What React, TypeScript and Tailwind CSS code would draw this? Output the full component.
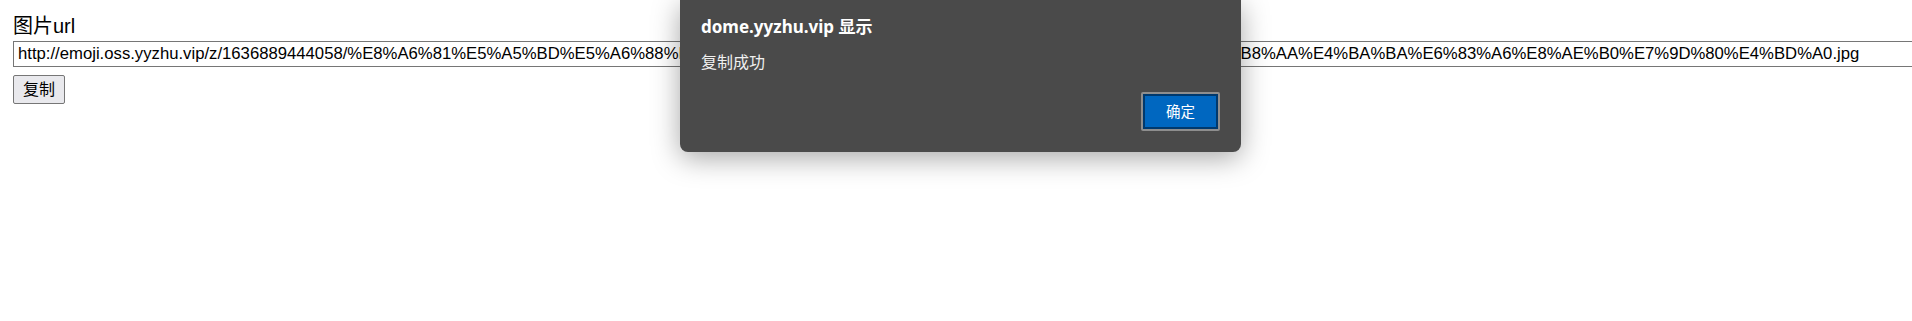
import React from 'react';

// Page: a copy-url form with a browser alert on top of it.

const URL_TEXT =
  'http://emoji.oss.yyzhu.vip/z/1636889444058/%E8%A6%81%E5%A5%BD%E5%A6%88%E5%A6%88%E6%80%BB%E4%BC%9A%E6%9C%89%E4%B8%80%E4%B8%AA%E4%BA%BA%E6%83%A6%E8%AE%B0%E7%9D%80%E4%BD%A0.jpg';

function AlertDialog(): React.JSX.Element {
  return (
    <div className="absolute left-[680px] top-0 w-[561px] h-[152px] bg-[#4a4a4a] rounded-b-[8px] shadow-[0_6px_28px_rgba(0,0,0,0.35)] px-[21px] font-['Noto_Sans','Noto_Sans_CJK_SC',sans-serif] text-white flex flex-col">
      <div className="pt-[16px] text-[17px] leading-[22px] font-bold">dome.yyzhu.vip 显示</div>
      <div className="mt-[14px] text-[16px] leading-[20px] text-[#f0f0f0]">复制成功</div>
      <div className="flex-1" />
      <div className="flex justify-end pb-[21px]">
        <button
          type="button"
          className="w-[79px] h-[39px] rounded-[2px] border-2 border-[#8e8e8e] p-0 flex"
        >
          <span className="flex-1 border-2 border-[#00396d] bg-[#0067c0] flex items-center justify-center text-[14.5px] text-white">
            确定
          </span>
        </button>
      </div>
    </div>
  );
}

export default function App(): React.JSX.Element {
  return (
    <div className="relative w-[1912px] h-[321px] overflow-hidden bg-white text-black font-['Liberation_Sans','Noto_Sans_CJK_SC',sans-serif]">
      <div className="pl-[13px] pt-[14px]">
        <div className="text-[20px] leading-[24px]">图片url</div>
        <input
          readOnly
          value={URL_TEXT}
          className="mt-[3px] block w-[1920px] h-[26px] border border-[#767676] px-[4px] text-[16.7px] outline-none"
        />
        <button
          type="button"
          className="mt-[8px] w-[52px] h-[29px] border border-[#767676] rounded-[2px] bg-[#e9e9ed] text-[16px] leading-[18px]"
        >
          复制
        </button>
      </div>
      <AlertDialog />
    </div>
  );
}
